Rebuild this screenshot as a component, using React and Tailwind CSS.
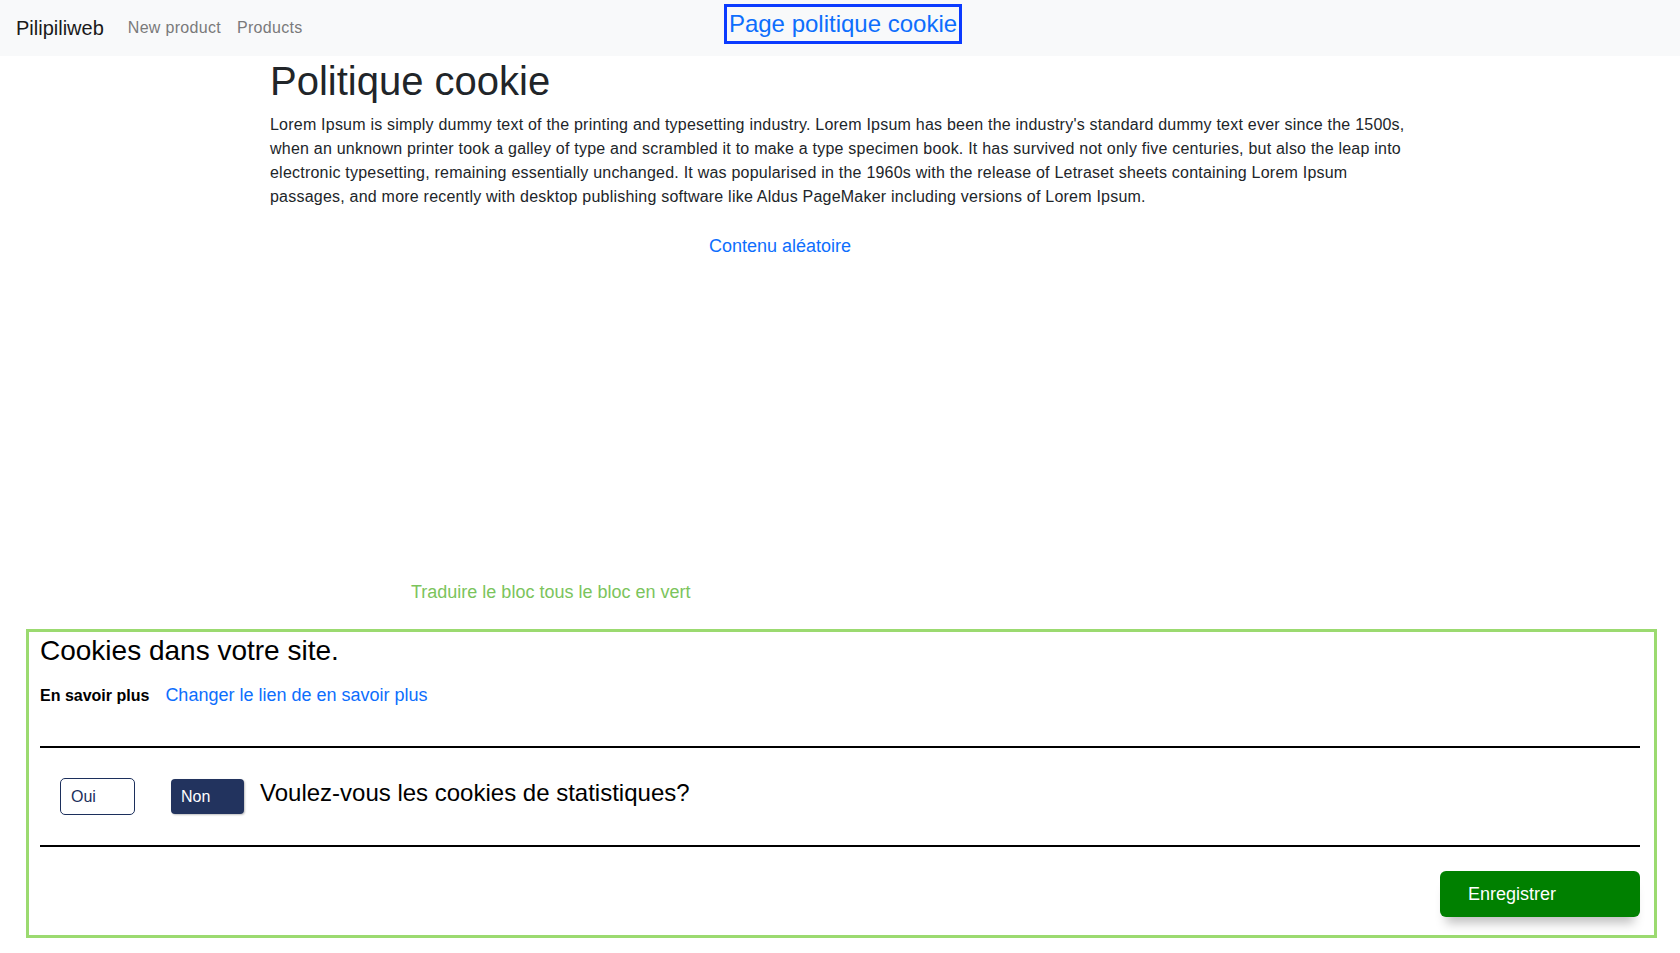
export default function App() {
  return (
    <div className="min-h-[953px] flex flex-col bg-white font-['Liberation_Sans',Arial,sans-serif]">
      <nav className="h-14 bg-[#f8f9fa] grid grid-cols-[1fr_auto_1fr]">
        <div className="flex items-center pl-4">
          <a className="text-[20px] leading-[30px] text-[#1a1a1a] mr-4">Pilipiliweb</a>
          <a className="px-2 text-[16px] leading-6 tracking-[0.3px] text-[#7a7a7a]">New product</a>
          <a className="px-2 text-[16px] leading-6 tracking-[0.3px] text-[#7a7a7a]">Products</a>
        </div>
        <div className="pt-1 ml-[6px]">
          <a className="block border-[3px] border-[#0b3bff] px-[2px] text-[24px] leading-[34px] text-[#0d6efd]">
            Page politique cookie
          </a>
        </div>
        <div />
      </nav>

      <main className="w-[1140px] mx-auto pt-px text-[#212529]">
        <h1 className="text-[40px] leading-[48px] font-medium mb-2">Politique cookie</h1>
        <p className="text-[16px] leading-6 tracking-[0.22px] mb-4">
          Lorem Ipsum is simply dummy text of the printing and typesetting industry. Lorem Ipsum has been the
          industry's standard dummy text ever since the 1500s, when an unknown printer took a galley of type and
          scrambled it to make a type specimen book. It has survived not only five centuries, but also the leap into
          electronic typesetting, remaining essentially unchanged. It was popularised in the 1960s with the release
          of Letraset sheets containing Lorem Ipsum passages, and more recently with desktop publishing software
          like Aldus PageMaker including versions of Lorem Ipsum.
        </p>
        <div className="w-[1020px] text-center pt-2">
          <a className="text-[18px] leading-[27px] text-[#0d6efd]">Contenu aléatoire</a>
        </div>
      </main>

      <section className="mt-auto">
        <p className="pl-[411px] text-[18px] leading-[27px] text-[#7bc45c] mb-[23px]">
          Traduire le bloc tous le bloc en vert
        </p>
        <div className="ml-[26px] mr-[23px] mb-[15px] border-[3px] border-[#9bda70] pl-[11px] pr-[14px] pt-[2px] pb-[18px] text-black">
          <h3 className="text-[28px] leading-[34px] font-medium">Cookies dans votre site.</h3>
          <div className="flex items-center gap-[16px] mt-[14px] h-[27px]">
            <span className="text-[16px] font-bold">En savoir plus</span>
            <a className="text-[18px] leading-[27px] text-[#0d6efd]">Changer le lien de en savoir plus</a>
          </div>
          <div className="mt-[37px] h-[2px] bg-black" />
          <div className="h-[97px] flex items-center">
            <button className="ml-[20px] w-[75px] h-[37px] text-left pl-[10px] text-[16px] text-[#1c2f5c] bg-white border border-[#1c2f5c] rounded-[5px]">
              Oui
            </button>
            <button className="ml-[36px] w-[73px] h-[35px] text-left pl-[10px] text-[16px] text-white bg-[#22335e] rounded-[4px] shadow-[1px_1px_2px_rgba(0,0,0,0.25)]">
              Non
            </button>
            <h4 className="ml-[16px] -mt-[8px] text-[24px] leading-[29px] font-medium">
              Voulez-vous les cookies de statistiques?
            </h4>
          </div>
          <div className="h-[2px] bg-black" />
          <div className="flex justify-end mt-[24px]">
            <button className="w-[200px] h-[46px] text-left pl-[28px] text-[18px] text-white bg-[#008000] rounded-[6px] shadow-[0_12px_10px_-6px_rgba(0,0,0,0.25)]">
              Enregistrer
            </button>
          </div>
        </div>
      </section>
    </div>
  );
}
